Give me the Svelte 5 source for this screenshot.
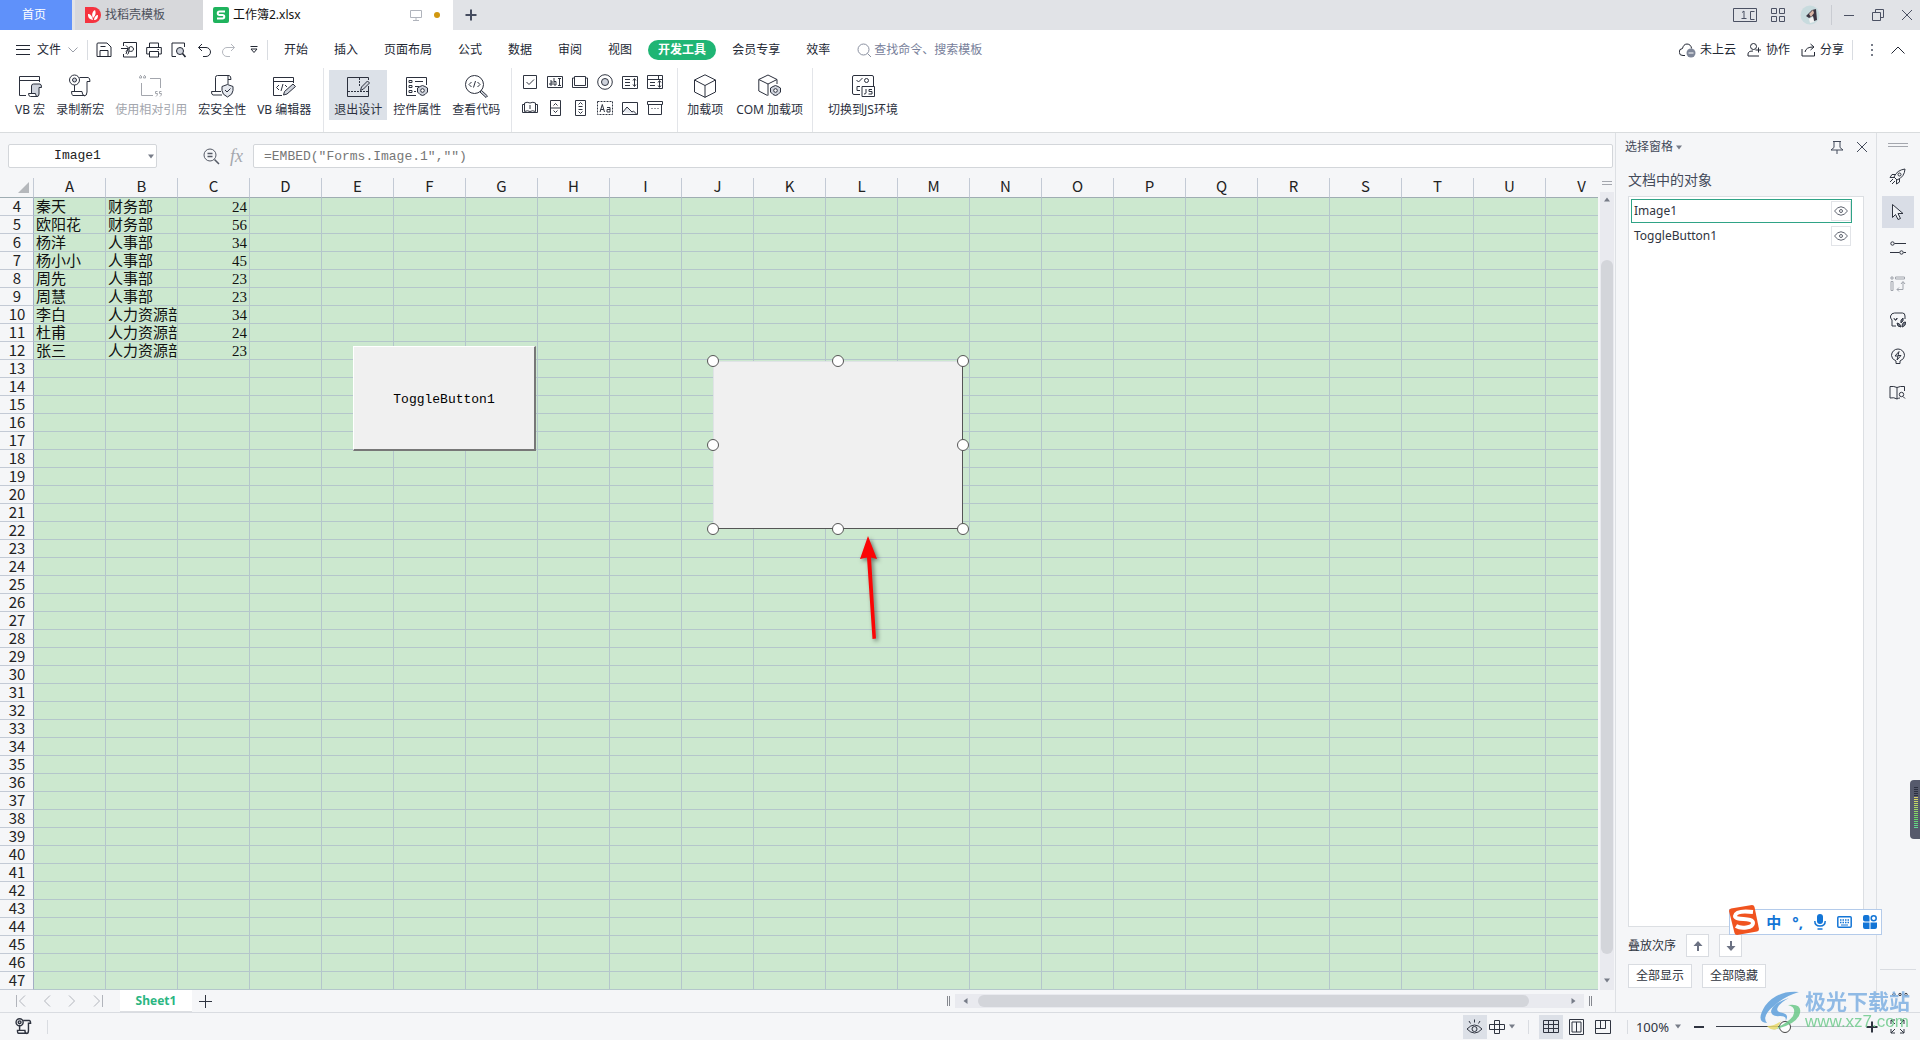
<script lang="ts">
	type Icon = [number, number, string];

	const icons: Record<string, Icon> = {
		docer: [16, 16, '<path d="M0 0h8a8 8 0 0 1 0 16H0z" fill="#f5333f" stroke="none"/><path d="M8 13C3 12 3 9 3 7c2 0 4 1 5 6zM8 11C6 7 8 4 10 3c1 3 1 5-2 8zM9 13c0-3 2-5 4-5 0 3-1 5-4 5z" fill="#fff" stroke="none"/>'],
		sheet: [16, 16, '<rect width="16" height="16" rx="2" fill="#1fb35d" stroke="none"/><path d="M12 4.500H6.500a1.700 1.700 0 0 0 0 3.500h3a1.700 1.700 0 0 1 0 3.500H4" stroke="#fff" stroke-width="2"/>'],
		monitor: [12, 12, '<path d="M.5 1.500h11v7H.500zM6 9v2M3 11.500h6" stroke="#b0b4bc"/>'],
		plus: [12, 12, '<path d="M6 .500v11M.500 6h11" stroke-width="2"/>'],
		plusThin: [13, 13, '<path d="M6.500 0v13M0 6.500h13"/>'],
		layout: [24, 15, '<path d="M.5 .500h23v13H.500zM9 4.500l2-1.500v8M8.500 10.500h5M21.500 3.500h-4v8h4"/>'],
		apps: [15, 15, '<path d="M.5 .500h5v5H.500zM8.500 .500h5v5h-5zM.500 8.500h5v5H.500zM8.500 8.500h5v5h-5z"/>'],
		avatar: [20, 20, '<circle cx="10" cy="10" r="9.500" fill="#c8dbde" stroke="none"/><path d="M6 11l6-6 4-1 1 11-3 1-1-5-4 2z" fill="#3a3440" stroke="none"/><path d="M9 9l4-4 1 3-3 4z" fill="#d9b6a6" stroke="none"/><path d="M9 14l4-2 1 5-4 1z" fill="#f2f2f2" stroke="none"/>'],
		min: [12, 12, '<path d="M1 6.500h10"/>'],
		restore: [12, 12, '<path d="M.5 3.500h8v8h-8zM3.500 3.500v-3h8v8h-3"/>'],
		close: [12, 12, '<path d="M1 1l10 10M11 1L1 11"/>'],
		menu: [14, 12, '<path d="M0 1.500h14M0 5.500h14M0 10.500h14"/>'],
		down: [10, 6, '<path d="M.5 .500L5 5 9.500 .500" stroke="#9a9ea8"/>'],
		up: [14, 8, '<path d="M.5 7.500L7 1l6.500 6.500"/>'],
		save: [16, 16, '<path d="M1 2q0-1 1-1h9l4 4v9.500H1zM4 14.500v-6h8v6M4.500 4.500h5"/>'],
		pdf: [16, 16, '<path d="M2.500 4V.500h13v14.500h-13V12M0 6.500h7M5 3.500l3 3-3 3M5 12l2-5.500M6.500 12.500c2-1 1-6 2-7.500 1.500-1 4 0 4 2s-2 3-4.500 2"/>'],
		print: [16, 16, '<path d="M3.500 5V1h9v4M3 12H.700V5.500h14.600V12H13M3.500 9.500h9V15h-9zM11.500 7.500h1.500"/>'],
		preview: [16, 16, '<path d="M5 14.500H1V1h12.500v4M13.500 14.500H14"/><circle cx="9" cy="9" r="3.500" fill="#cfd3dc"/><path d="M11.500 11.500l3 3.500" stroke-width="1.600"/>'],
		undo: [14, 15, '<path d="M5 1L1.500 4.500 5 8M1.500 4.500H9a4 4 0 0 1 0 9H6"/>'],
		redo: [14, 15, '<path d="M9 1l3.500 3.500L9 8M12.500 4.500H5a4 4 0 0 0 0 9h3" stroke="#b4b7be"/>'],
		custom: [8, 8, '<path d="M.5 .500h7M1 3l3 3.500L7 3z"/>'],
		search: [15, 15, '<circle cx="6.500" cy="6.500" r="5.500"/><path d="M10.500 10.500L14 14"/>'],
		cloud: [17, 15, '<path d="M6 12.500H4a3.500 3.500 0 0 1-.5-7C4 3 5.500 1 8 1s4.500 2 4.500 4.500"/><circle cx="12" cy="10" r="4.500" fill="#7f8799" stroke="none"/><path d="M9.500 10h5" stroke="#fff"/>'],
		collab: [15, 14, '<circle cx="6.500" cy="3.500" r="3"/><path d="M12 13H1v-2q0-3 5-3M8.500 7H14M11.500 4.500v5"/>'],
		share: [15, 14, '<path d="M1 6v7h12.500V9M4 9q1-5 8-5M9.500 1l3.500 3-3.500 3"/>'],
		dots: [4, 12, '<path d="M2 0v2M2 5v2M2 10v2" stroke="#777c88" stroke-width="2"/>'],
		vbMacro: [24, 24, '<path d="M8 21.500H1.500V2.500H21.500V8M1.500 6.500H21.500"/><path d="M13.500 19V12q0-2 2-2h6.500q1.500 0 1.500 3.500H21V20q0 2.500-2 2.500" fill="#cfd3dc"/><path d="M10.500 19.500h7q0 3 2 3h-7q-2 0-2-3z" fill="#fff"/>'],
		record: [24, 24, '<circle cx="6.500" cy="6" r="5"/><circle cx="6.500" cy="6" r="2" fill="#cfd3dc"/><path d="M11.500 3.500H20q2 0 2 4h-3V18M6.500 11v6.500M3.500 17.500H14q0 4 2.500 4H5q-1.500 0-1.500-4zM19 18q0 4-3 4"/>'],
		relative: [24, 24, '<path d="M11 4.500h10.500V14M2.500 9v12.500H14M2 1q-1.500 1-1.500 3h2V2M6 1q-1.500 1-1.500 3h2V2M18.500 17.500h-2v2h2q0 2-1.500 3M22.500 17.500h-2v2h2q0 2-1.500 3"/>'],
		security: [24, 24, '<path d="M5.500 18V3.500q0-2 2-2H19q2 0 2 4h-3M18 2v8M12 21H3q-1.500 0-1.500-3.500H11"/><path d="M17.500 10.500l5.500 2v4q0 4-5.500 6.500-5.500-2.500-5.500-6.500v-4z" fill="#e6e9ef"/><path d="M15 16l2 2 3.500-3.500"/>'],
		editor: [24, 24, '<path d="M10 21.500H1.500V3.500H21.500V9M1.500 7.500H21.500M7 11l-2.500 2.500L7 16M9 17l2-7M13 11l2 2"/><path d="M11.500 21l1-3.500 8.500-7.500 2.500 2.500-8.500 7.500z" fill="#cfd3dc"/>'],
		design: [24, 24, '<path d="M22.500 12v10.500H1.500V3.500H22.500V6"/><path d="M13.500 4v8.500M2 17.500h20" stroke-dasharray="2 1"/><path d="M14.500 16.500l1-3.500 6-6 2 2-6 6z" fill="#cfd3dc"/>'],
		props: [24, 24, '<path d="M11 21.500H1.500V3.500H21.500V11M10 7.500h8M10 12.500h4M4 6.500h3v2H4zM4 11.500h3v2H4zM4 16.500h3v2H4zM9 17.500h2"/><path d="M17.500 11.500l2.500 1 2.500 1.500v4l-2.500 2.500-2.500 1-2.500-1-2.500-2.500v-4l2.500-1.500z" fill="#cfd3dc"/><circle cx="17.500" cy="16.500" r="1.800" fill="#fff"/>'],
		viewCode: [24, 24, '<circle cx="10.500" cy="10.500" r="9"/><path d="M7.500 8L5 10.500 7.500 13M9.500 13.500l2-6.500M13.500 8l2.500 2.500-2.500 2.500"/><path d="M16 18l1.500-1.500 6 5.500-1.500 1.500z" fill="#cfd3dc"/>'],
		cube: [24, 24, '<path d="M12 .800L22.500 6v12L12 23.300 1.500 18V6zM1.500 6L12 11.500 22.500 6M12 11.500v12"/>'],
		cubeGear: [24, 24, '<path d="M9.500 21.500L.800 17V5.500L10 1l9 4.500V10M.800 5.500L10 10l9-4.500M10 10v11.500"/><path d="M17.500 11.500l2.500 1 2.500 1.500v4l-2.500 2.500-2.500 1-2.500-1-2.500-2.500v-4l2.500-1.500z" fill="#cfd3dc"/><circle cx="17.500" cy="16.500" r="1.800" fill="#fff"/>'],
		js: [24, 24, '<path d="M9 20.500H3q-1.500 0-1.500-1.500V3q0-1.500 1.500-1.500h18q1.500 0 1.500 1.500v9M5.500 6l2 2 4-4M9 12.500H6v4h3"/><circle cx="15.500" cy="6.500" r="2"/><path d="M11 12.500h12.500v10H11zM15 15v4q0 1-2 1M21 15.500h-3v2h3v2.500h-3.500"/>'],
		check: [16, 16, '<path d="M1.500 1.500h13v13h-13zM4.500 8l2.500 2.500 5-5"/>'],
		textbox: [16, 16, '<path d="M.5 2.500h15v11H.500zM3 7h2v4H3V9h2M7 4v7h2V7.500H7M11 4.500h3M11 11.500h3M12.500 4.500v7"/>'],
		command: [16, 16, '<path d="M2.500 2.500h11v9h-11zM2.500 4H.500v9.500h15V4h-2"/>'],
		option: [16, 16, '<circle cx="8" cy="8" r="7.300"/><circle cx="8" cy="8" r="3.500" fill="#cfd3dc"/>'],
		listbox: [16, 16, '<path d="M.5 2.500h15v12H.500zM3 5.500h5M3 8.500h5M3 11.500h5M12.500 5v7M11 6.500l1.500-2 1.500 2M11 10.500l1.500 2 1.500-2"/>'],
		combo: [16, 16, '<path d="M.5 1.500h15v13H.500zM.500 5.500h15M11.500 1.500v4M3 8.500h5M3 11.500h5M12.500 7v6M11 8.500l1.500-2 1.500 2M11 11.500l1.500 2 1.500-2"/>'],
		toggle: [16, 16, '<path d="M8 3Q5 1.500 2.500 3v8.500Q5.500 10 8 11.500 10.500 10 13.500 11.500V3Q11 1.500 8 3zM8 5v4M2.500 4.500h-2v8h15v-8h-2"/>'],
		spin: [16, 16, '<path d="M3.500 .500h10v15h-10zM3.500 8h10M6.500 5.500l2-2 2 2M6.500 10.500l2 2 2-2"/>'],
		scroll: [16, 16, '<path d="M3.500 .500h10v15h-10zM6.500 4.500l2-2 2 2M6.500 11.500l2 2 2-2M6.500 6.500h4M6.500 9.500h4"/>'],
		label: [16, 16, '<path d="M.5 1.500h15v13H.500z" stroke-dasharray="2 1"/><path d="M3 12l2.300-7.500L7.500 12M3.800 9.500h3M10 7.500h3V12h-3V9.500h3"/>'],
		image: [16, 16, '<path d="M.5 2.500h15v12H.500z"/><path d="M1 12l4-5 5 5 1.500-1 3 3" fill="#e6e9ef"/>'],
		frame: [16, 16, '<path d="M.5 1.500h15v3H.500zM1.500 4.500h13v10h-13zM4.500 8.500h1M7.500 8.500h1M10.500 8.500h1"/>'],
		zoomOut: [17, 17, '<circle cx="7" cy="7" r="6"/><path d="M4.500 5.500h5M4.500 8.500h5M11.500 11.500l4.500 4.500" stroke-width="1.500"/>'],
		caret: [8, 5, '<path d="M1 .500h6L4 4.500z" fill="#777c88" stroke="none"/>'],
		caretUp: [8, 5, '<path d="M1 4.500h6L4 .500z" fill="#777c88" stroke="none"/>'],
		caretLeft: [5, 8, '<path d="M4.500 1v6L.500 4z" fill="#777c88" stroke="none"/>'],
		caretRight: [5, 8, '<path d="M.5 1v6L4.500 4z" fill="#777c88" stroke="none"/>'],
		pin: [14, 14, '<path d="M4 1.500h6v6l3 2.500H1l3-2.500zM3 1.500h8M7 10v4"/>'],
		eye: [14, 10, '<path d="M.5 5Q7-3.500 13.500 5 7 13.500 .500 5z"/><circle cx="7" cy="5" r="1.500"/>'],
		rocket: [17, 17, '<path d="M5 9q3-7 11-8-.5 8-8 11zM6 6.500H3L1 9.500h4M10.500 11v3l-3 2v-4M4 11l-3 3M6 13l-3 3"/><circle cx="10.500" cy="6.500" r="1.500"/>'],
		cursor: [14, 18, '<path d="M1.500 1.500v13l3-3 2.500 5 2.500-1-2.500-5h5z" fill="#eef0f4"/>'],
		sliders: [16, 14, '<circle cx="2.500" cy="2.500" r="1.700"/><circle cx="11.500" cy="11.500" r="1.700"/><path d="M4.500 2.500H16M0 11.500h9.500M13.500 11.500H16"/>'],
		transform: [16, 16, '<path d="M1 1h2v2H1zM5.500 1h9v2h-9zM1 5.500h2v9H1zM13 6v7.500H7M11 8l2-2.500L15 8M9 11.500l-2 2 2 2"/>'],
		theme: [16, 16, '<path d="M6 14H2V8Q0 6 .500 4q1-3 4-3h8q2.500 0 2.500 3v3M4 6q0 2 1.500 2T7 6M5 8q2 0 2-2"/><path d="M11 15q-4 0-4-4 3 0 4 4zM11 11q-1-3 2-5 1 3-2 5zM12 15q0-5 3.500-5 .5 4-3.500 5z" fill="#777d89"/>'],
		idea: [16, 17, '<path d="M6 15.500V13Q1.500 11 1.500 7.500a6.500 6.500 0 0 1 13 0Q14.500 11 10 13v2.500zM9 3.500L5 8h3l-1 4 4-4.500H8z"/>'],
		book: [17, 15, '<path d="M8 14q-3-2-7-1V1.500q4-.5 7 1 3-1.500 7.500-1V6M8 2.500V14M8 14q1.500-1 3-1"/><circle cx="12.500" cy="9.500" r="2.200"/><path d="M14 11.500l2 2"/>'],
		more: [16, 5, '<circle cx="2" cy="2.500" r="1.200"/><circle cx="8" cy="2.500" r="1.200"/><circle cx="14" cy="2.500" r="1.200"/>'],
		first: [10, 12, '<path d="M.5 0v12M9 .500L3.500 6 9 11.500"/>'],
		prev: [8, 12, '<path d="M7 .500L1.500 6 7 11.500"/>'],
		next: [8, 12, '<path d="M1 .500L6.500 6 1 11.500"/>'],
		last: [10, 12, '<path d="M9.500 0v12M1 .500L6.500 6 1 11.500"/>'],
		arrowUp: [10, 10, '<path d="M5 10V3" stroke-width="2"/><path d="M.5 5L5 0l4.500 5z" fill="currentColor" stroke="none"/>'],
		arrowDown: [10, 10, '<path d="M5 0v7" stroke-width="2"/><path d="M.5 5L5 10l4.500-5z" fill="currentColor" stroke="none"/>'],
		eyeLash: [17, 16, '<path d="M1 10q7.500-8 15 0-7.500 8-15 0zM8.500 .500v3M3 2l1.500 2.500M14 2l-1.500 2.500"/><circle cx="8.500" cy="10" r="2.500"/>'],
		cross: [16, 14, '<path d="M5.500 .500h5v13h-5zM.500 4.500h15v5H.500zM10.500 4.500v5M5.500 4.500v5"/>'],
		normal: [16, 14, '<path d="M.5 .500h15v12H.500zM.500 4.500h15M.500 8.500h15M5.500 .500v12M10.500 .500v12"/>'],
		page: [16, 16, '<path d="M.5 .500h14v15H.500zM3 3h9v10H3zM7.500 3v10"/>'],
		breaks: [16, 14, '<path d="M.5 .500h15v13H.500zM.500 8.500h10M5.500 .500v8M10.500 .500v8"/>'],
		minus: [10, 2, '<path d="M0 1h10" stroke-width="2"/>'],
		expand: [15, 15, '<path d="M1 5V1h4M10 1h4v4M14 10v4h-4M5 14H1v-4M1 1l4 4M14 1l-4 4M14 14l-4-4M1 14l4-4"/>'],
		imeMic: [12, 16, '<rect x="3" y="0" width="6" height="10" rx="3" fill="#1375d6" stroke="none"/><path d="M.8 7q0 5 5.200 5t5.200-5M3.500 15h5" stroke="#1375d6" stroke-width="1.500"/>'],
		imeKeys: [15, 12, '<rect x=".8" y=".8" width="13.400" height="10.400" rx="1" stroke="#1375d6" stroke-width="1.500"/><path d="M3 4h9.500M3 6.500h9.500" stroke="#1375d6" stroke-width="1.500" stroke-dasharray="1.500 1"/><path d="M4 9h7" stroke="#1375d6"/>'],
		imeApps: [14, 14, '<path d="M2 0h2.500q2 0 2 2v4.500H2q-2 0-2-2V2q0-2 2-2zM0 7.500h6.500V14H2q-2 0-2-2zM7.500 7.500H14V12q0 2-2 2H7.500z" fill="#1375d6" stroke="none"/><circle cx="10.700" cy="3.300" r="2.500" stroke="#1375d6" stroke-width="1.500"/>'],
	};

	const menus = ['开始', '插入', '页面布局', '公式', '数据', '审阅', '视图', '开发工具', '会员专享', '效率'];
	const quick = ['save', 'pdf', 'print', 'preview', 'undo', 'redo'];

	const macros = [
		['vbMacro', 'VB 宏'],
		['record', '录制新宏'],
		['relative', '使用相对引用'],
		['security', '宏安全性'],
		['editor', 'VB 编辑器'],
	];
	const controls = [
		['design', '退出设计'],
		['props', '控件属性'],
		['viewCode', '查看代码'],
	];
	const addins = [
		['cube', '加载项'],
		['cubeGear', 'COM 加载项'],
	];
	const widgets = ['check', 'textbox', 'command', 'option', 'listbox', 'combo', 'toggle', 'spin', 'scroll', 'label', 'image', 'frame'];
	const tools = ['rocket', 'cursor', 'sliders', 'transform', 'theme', 'idea', 'book'];

	const columns = [...'ABCDEFGHIJKLMNOPQRSTUV'];
	const rows = Array.from({ length: 44 }, (_, i) => i + 4);
	const data: Record<number, [string, string, number]> = {
		4: ['秦天', '财务部', 24],
		5: ['欧阳花', '财务部', 56],
		6: ['杨洋', '人事部', 34],
		7: ['杨小小', '人事部', 45],
		8: ['周先', '人事部', 23],
		9: ['周慧', '人事部', 23],
		10: ['李白', '人力资源部', 34],
		11: ['杜甫', '人力资源部', 24],
		12: ['张三', '人力资源部', 23],
	};

	const handles = ['nw', 'n', 'ne', 'w', 'e', 'sw', 's', 'se'];

	let activeMenu = $state('开发工具');
	let selected = $state('Image1');
	let zoom = $state(50);
</script>

{#snippet icon(name: string)}
	<svg
		class="icon"
		width={icons[name][0]}
		height={icons[name][1]}
		viewBox="0 0 {icons[name][0]} {icons[name][1]}"
		aria-hidden="true">{@html icons[name][2]}</svg
	>
{/snippet}

{#snippet big(items: string[][])}
	{#each items as [name, text]}
		<button class="big" class:active={name === 'design'} disabled={name === 'relative'}>
			{@render icon(name)}
			<span>{text}</span>
		</button>
	{/each}
{/snippet}

<div class="app">
	<header class="titlebar">
		<button class="tab home">首页</button>
		<button class="tab docer">{@render icon('docer')}找稻壳模板</button>
		<button class="tab file">
			{@render icon('sheet')}<span class="grow">工作簿2.xlsx</span>
			{@render icon('monitor')}<i class="dot"></i>
		</button>
		<button class="new" aria-label="新建">{@render icon('plus')}</button>
		<div class="window">
			<button aria-label="布局">{@render icon('layout')}</button>
			<button aria-label="应用">{@render icon('apps')}</button>
			<button aria-label="账户">{@render icon('avatar')}</button>
			<i class="sep"></i>
			<button aria-label="最小化">{@render icon('min')}</button>
			<button aria-label="还原">{@render icon('restore')}</button>
			<button aria-label="关闭">{@render icon('close')}</button>
		</div>
	</header>

	<nav class="menubar">
		<button class="filemenu">{@render icon('menu')}文件 {@render icon('down')}</button>
		<i class="sep"></i>
		<div class="quick">
			{#each quick as name}
				<button aria-label={name}>{@render icon(name)}</button>
			{/each}
			<button aria-label="自定义">{@render icon('custom')}</button>
		</div>
		<i class="sep"></i>
		<div class="menus">
			{#each menus as menu}
				<button class:pill={menu === activeMenu} onclick={() => (activeMenu = menu)}>{menu}</button>
			{/each}
		</div>
		<label class="search">
			{@render icon('search')}
			<input type="text" placeholder="查找命令、搜索模板" />
		</label>
		<div class="account">
			<button>{@render icon('cloud')}未上云</button>
			<button>{@render icon('collab')}协作</button>
			<button>{@render icon('share')}分享</button>
			<i class="sep"></i>
			<button aria-label="更多">{@render icon('dots')}</button>
			<button aria-label="收起">{@render icon('up')}</button>
		</div>
	</nav>

	<section class="ribbon">
		<div class="group">{@render big(macros)}</div>
		<div class="group">{@render big(controls)}</div>
		<div class="group widgets">
			{#each widgets as name}
				<button aria-label={name}>{@render icon(name)}</button>
			{/each}
		</div>
		<div class="group addins">{@render big(addins)}</div>
		<div class="group env">{@render big([['js', '切换到JS环境']])}</div>
	</section>

	<div class="main">
		<main class="workbook">
			<div class="formulabar">
				<div class="namebox">
					<input type="text" aria-label="名称框" value="Image1" />
					<button aria-label="名称列表">{@render icon('caret')}</button>
				</div>
				<div class="fx">
					<button aria-label="缩小">{@render icon('zoomOut')}</button>
					<button class="fxbtn">fx</button>
				</div>
				<input class="formula" type="text" aria-label="编辑栏" value={'=EMBED("Forms.Image.1","")'} />
			</div>

			<div class="sheetrow">
				<div class="sheet">
					<table>
						<colgroup>
							<col class="rowcol" />
							{#each columns as column (column)}<col />{/each}
						</colgroup>
						<thead>
							<tr>
								<th class="corner" aria-label="全选"><i></i></th>
								{#each columns as column}<th>{column}</th>{/each}
							</tr>
						</thead>
						<tbody>
							{#each rows as row (row)}
								<tr>
									<th>{row}</th>
									{#each columns as column, i}
										<td class:number={i === 2}>{data[row]?.[i] ?? ''}</td>
									{/each}
								</tr>
							{/each}
						</tbody>
					</table>

					<button class="toggle">ToggleButton1</button>
					<div class="object">
						{#each handles as handle}<i class="handle {handle}"></i>{/each}
					</div>
					<svg class="pointer" width="30" height="112" viewBox="0 0 30 112" aria-hidden="true">
						<path d="M10 4L19 27l-6-1.500L18 106.500l-3.500.5L9 25.500 2 27z" />
					</svg>
				</div>
				<div class="vscroll">
					<i class="grip"></i>
					<div class="vtrack">
						{@render icon('caretUp')}
						<i class="vthumb"></i>
						{@render icon('caret')}
					</div>
				</div>
			</div>

			<div class="tabs">
				<div class="pager">
					<button aria-label="第一张">{@render icon('first')}</button>
					<button aria-label="上一张">{@render icon('prev')}</button>
					<button aria-label="下一张">{@render icon('next')}</button>
					<button aria-label="最后一张">{@render icon('last')}</button>
				</div>
				<button class="sheettab">Sheet1</button>
				<button class="add" aria-label="新建工作表">{@render icon('plusThin')}</button>
				<div class="hscroll">
					<i class="vgrip"></i>
					<div class="htrack">
						{@render icon('caretLeft')}
						<i class="hthumb"></i>
						{@render icon('caretRight')}
					</div>
					<i class="vgrip"></i>
				</div>
			</div>
		</main>

		<aside class="pane">
			<div class="panehead">
				<button>选择窗格 {@render icon('caret')}</button>
				<button class="pinbtn" aria-label="固定">{@render icon('pin')}</button>
				<button aria-label="关闭窗格">{@render icon('close')}</button>
			</div>
			<h2>文档中的对象</h2>
			<ul>
				{#each ['Image1', 'ToggleButton1'] as name}
					<li class:selected={selected === name}>
						<button class="name" onclick={() => (selected = name)}>{name}</button>
						<button class="eye" aria-label="显示 {name}">{@render icon('eye')}</button>
					</li>
				{/each}
			</ul>
			<div class="order">
				<span>叠放次序</span>
				<button aria-label="上移一层">{@render icon('arrowUp')}</button>
				<button aria-label="下移一层">{@render icon('arrowDown')}</button>
			</div>
			<div class="visibility">
				<button>全部显示</button>
				<button>全部隐藏</button>
			</div>
		</aside>

		<aside class="toolbar">
			<i class="grip"></i>
			{#each tools as name}
				<button class:active={name === 'cursor'} class:muted={name === 'transform'} aria-label={name}>{@render icon(name)}</button>
			{/each}
			<div class="bottom"><button aria-label="更多工具">{@render icon('more')}</button></div>
		</aside>
	</div>

	<footer class="status">
		<button class="rec" aria-label="录制宏">{@render icon('record')}</button>
		<i class="sep"></i>
		<div class="views">
			<button class="active" aria-label="护眼模式">{@render icon('eyeLash')}</button>
			<button class="reading" aria-label="阅读模式">{@render icon('cross')}{@render icon('caret')}</button>
			<i class="sep"></i>
			<button class="active" aria-label="普通视图">{@render icon('normal')}</button>
			<button aria-label="页面布局">{@render icon('page')}</button>
			<button aria-label="分页预览">{@render icon('breaks')}</button>
			<i class="sep"></i>
		</div>
		<div class="zoom">
			<button class="percent">100% {@render icon('caret')}</button>
			<button aria-label="缩小">{@render icon('minus')}</button>
			<input type="range" aria-label="缩放" min="0" max="100" bind:value={zoom} />
			<button aria-label="放大">{@render icon('plus')}</button>
			<button aria-label="全屏">{@render icon('expand')}</button>
		</div>
	</footer>

	<div class="ime">
		<svg class="sogou" width="32" height="32" viewBox="0 0 32 32" aria-hidden="true">
			<path d="M1 7q0-2 2-2.500L24 1q2 0 2.500 2L31 25q0 2-2 2.500L9 31q-2 0-2.500-2z" fill="#f0531f" />
			<path d="M25 8Q8 6 7 12c0 5 18 1 18 7 0 5-12 6-17 3" fill="none" stroke="#fff" stroke-width="4" />
		</svg>
		<span>中</span>
		<span>°,</span>
		{@render icon('imeMic')}
		{@render icon('imeKeys')}
		{@render icon('imeApps')}
	</div>

	<div class="meter">
		{#each Array(21) as _, i}
			<i style="background: {i < 5 ? '#2c3040' : `hsl(${55 + (i - 5) * 6}, 60%, 62%)`}"></i>
		{/each}
	</div>

	<div class="watermark">
		<svg width="46" height="42" viewBox="0 0 46 42" aria-hidden="true">
			<path d="M40 2Q18 0 6 16-4 32 8 33 2 26 16 15 26 6 40 2z" fill="#5ea0dc" />
			<path d="M30 8Q14 13 12 21q0 6 9 5 8 0 5 6 5-7-2-9-8-1-5-6 3-5 11-9z" fill="#5ea0dc" />
			<path d="M29 15q14-2 12 8-3 12-28 17 16-7 21-14 4-9-5-11z" fill="#6cc98a" />
			<path d="M8 36q8 0 14-5l-4 8q-6 2-10-3z" fill="#e8d96a" />
		</svg>
		<div>
			<b>极光下载站</b>
			<span>www.xz7.com</span>
		</div>
	</div>
</div>

<style>
	:global(body) {
		margin: 0;
	}

	.app {
		position: relative;
		display: flex;
		flex-direction: column;
		height: 100vh;
		overflow: hidden;
		background: #f5f6f8;
		color: #2f3440;
		font: 12px/16px 'Noto Sans', 'Noto Sans CJK SC', sans-serif;
	}

	button,
	input {
		box-sizing: border-box;
		margin: 0;
		padding: 0;
		border: 0;
		background: none;
		color: inherit;
		font: inherit;
		white-space: nowrap;
	}

	button {
		display: flex;
		align-items: center;
		justify-content: center;
	}

	.icon {
		flex: none;
		display: block;
		fill: none;
		stroke: currentColor;
	}

	.sep {
		width: 1px;
		height: 20px;
		background: #d9dce1;
	}

	/* title bar */
	.titlebar {
		display: flex;
		height: 30px;
		background: #e1e3e7;
	}

	.tab {
		height: 30px;
	}

	.home {
		width: 72px;
		padding-right: 4px;
		background: #5f91fa;
		color: #fff;
	}

	.docer {
		justify-content: flex-start;
		gap: 4px;
		width: 128px;
		margin-left: 3px;
		padding-left: 10px;
		background: #d7d8db;
		color: #4c505b;
	}

	.file {
		gap: 4px;
		width: 250px;
		padding: 0 13px 0 10px;
		background: #fff;
		color: #111;
	}

	.grow {
		flex: 1;
		text-align: left;
	}

	.dot {
		width: 6px;
		height: 6px;
		margin-left: 8px;
		border-radius: 50%;
		background: #d1970f;
	}

	.new {
		width: 36px;
		color: #454c5f;
	}

	.window {
		display: flex;
		align-items: center;
		gap: 14px;
		margin-left: auto;
		padding-right: 7px;
		color: #4b5163;
	}

	.window .sep {
		margin: 0 -3px;
		background: #c9ccd2;
	}

	.window button:nth-last-child(-n + 2) {
		margin-left: 3px;
	}

	/* menu bar */
	.menubar {
		display: flex;
		align-items: center;
		height: 36px;
		padding-top: 2px;
		background: #fff;
		color: #222733;
	}

	.filemenu {
		gap: 7px;
		width: 87px;
		padding-left: 7px;
	}

	.quick {
		display: flex;
		align-items: center;
		gap: 9px;
		width: 179px;
		padding-left: 8px;
		box-sizing: border-box;
	}

	.quick button {
		width: 16px;
	}

	.menus {
		display: flex;
		gap: 6px;
		padding-left: 6px;
	}

	.menus button {
		height: 20px;
		padding: 0 10px;
		border-radius: 10px;
	}

	.menus .pill {
		background: #1fb574;
		color: #fff;
		font-weight: bold;
	}

	.search {
		display: flex;
		align-items: center;
		gap: 2px;
		margin-left: 17px;
		color: #8a90a0;
	}

	.search input {
		width: 140px;
	}

	.search input::placeholder {
		color: #77809a;
		opacity: 1;
	}

	.account {
		display: flex;
		align-items: center;
		gap: 11px;
		margin-left: auto;
		padding-right: 15px;
	}

	.account button {
		gap: 4px;
	}

	.account .sep {
		margin-left: -3px;
	}

	.account button:nth-last-child(-n + 2) {
		margin-left: 6px;
	}

	/* ribbon */
	.ribbon {
		display: flex;
		height: 64px;
		border-bottom: 1px solid #d9dcde;
		background: #fff;
	}

	.group {
		display: flex;
		align-items: flex-start;
		gap: 1px;
		padding: 2px 5px;
		border-right: 1px solid #e3e5e9;
	}

	.group:first-child {
		padding-left: 10px;
		padding-right: 7px;
	}

	.group:nth-child(2) {
		padding-right: 6px;
	}

	.big {
		flex-direction: column;
		gap: 4px;
		height: 50px;
		padding: 2px 5px 0;
		color: #2b303d;
	}

	.big:disabled {
		color: #a3a6ad;
	}

	.big.active {
		background: #dce1e8;
	}

	.widgets {
		display: grid;
		grid-template-columns: repeat(6, 16px);
		align-content: start;
		gap: 10px 9px;
		padding: 6px 14px 6px 10px;
	}

	.addins {
		gap: 3px;
		padding: 2px 4px;
	}

	.env {
		padding-left: 10px;
		border-right: 0;
	}

	/* main area */
	.main {
		display: flex;
		flex: 1;
		min-height: 0;
	}

	.workbook {
		display: flex;
		flex: 1;
		flex-direction: column;
		min-width: 0;
	}

	.formulabar {
		display: flex;
		padding: 11px 2px 10px 8px;
		font: 13px/16px 'Liberation Mono', monospace;
	}

	.namebox {
		display: flex;
		width: 149px;
		height: 24px;
		box-sizing: border-box;
		border: 1px solid #d3d6da;
		border-radius: 2px;
		background: #fff;
		color: #222;
	}

	.namebox input {
		flex: 1;
		min-width: 0;
		text-align: center;
	}

	.namebox button {
		width: 10px;
		color: #666;
	}

	.fx {
		display: flex;
		align-items: center;
		justify-content: flex-end;
		gap: 10px;
		width: 96px;
		padding-right: 10px;
		box-sizing: border-box;
		color: #555a66;
	}

	.fxbtn {
		color: #a4a7ad;
		font: italic 18px/20px 'Liberation Serif', serif;
	}

	.formula {
		flex: 1;
		height: 24px;
		padding: 0 10px;
		border: 1px solid #d3d6da;
		border-radius: 2px;
		background: #fff;
		color: #777;
	}

	.sheetrow {
		display: flex;
		flex: 1;
		min-height: 0;
	}

	.sheet {
		position: relative;
		flex: 1;
		min-width: 0;
		overflow: hidden;
	}

	table {
		width: 1618px;
		border-spacing: 0;
		table-layout: fixed;
	}

	col {
		width: 72px;
	}

	.rowcol {
		width: 34px;
	}

	tr {
		height: 18px;
	}

	thead tr {
		height: 20px;
	}

	th,
	td {
		box-sizing: border-box;
		padding: 0;
		border-right: 1px solid #b4c6cb;
		border-bottom: 1px solid #b4c6cb;
		white-space: nowrap;
	}

	th {
		border-color: #c3cad5;
		background: #f5f6f8;
		color: #222;
		font: 15px/15px 'Noto Sans CJK SC', sans-serif;
		vertical-align: top;
	}

	thead th {
		border-bottom-color: #9fadb3;
	}

	tbody th {
		border-right-color: #a3aec4;
		padding-left: 1px;
	}

	.corner {
		vertical-align: middle;
	}

	.corner i {
		display: block;
		width: 0;
		margin-left: 18px;
		border-left: 11px solid transparent;
		border-bottom: 11px solid #b5b8bc;
	}

	td {
		height: 18px;
		padding: 1px 0 0 2px;
		background: #cce8cf;
		color: #111;
		font: 15px/16px 'Liberation Serif', 'Noto Sans CJK SC', serif;
		overflow: hidden;
	}

	.number {
		padding-right: 2px;
		text-align: right;
	}

	.toggle {
		position: absolute;
		left: 353px;
		top: 168px;
		width: 183px;
		height: 105px;
		padding-top: 4px;
		border: solid;
		border-width: 1px 2px 2px 1px;
		border-color: #fff #777 #777 #fff;
		background: #f0f0f0;
		color: #000;
		font: 13px/16px 'Liberation Mono', monospace;
	}

	.object {
		position: absolute;
		left: 713px;
		top: 183px;
		width: 250px;
		height: 168px;
		background: #f0f0f0;
		box-shadow: inset 1px 1px #dfe3e6, inset -1px -1px #555;
	}

	.handle {
		position: absolute;
		left: 50%;
		top: 50%;
		width: 10px;
		height: 10px;
		margin: -6px;
		border: 1px solid #555;
		border-radius: 50%;
		background: #fff;
	}

	.nw, .w, .sw { left: 0; }
	.ne, .e, .se { left: 100%; }
	.nw, .n, .ne { top: 0; }
	.sw, .s, .se { top: 100%; }

	.pointer {
		position: absolute;
		left: 858px;
		top: 354px;
		fill: #fb0505;
		filter: drop-shadow(2px 2px 2px rgba(0, 0, 0, 0.5));
	}

	.vscroll {
		display: flex;
		flex-direction: column;
		align-items: center;
		width: 17px;
	}

	.grip {
		width: 10px;
		height: 2px;
		margin: 3px 0 7px;
		border: solid #a4a7ae;
		border-width: 1px 0;
	}

	.vtrack {
		display: flex;
		flex: 1;
		flex-direction: column;
		align-items: center;
		width: 14px;
		padding: 5px 0 7px;
		background: #e9eaef;
		color: #81858f;
	}

	.vthumb {
		flex: 1;
		width: 12px;
		margin: 58px 0 24px;
		border-radius: 6px;
		background: #d3d5da;
	}

	.tabs {
		display: flex;
		height: 22px;
	}

	.pager {
		display: flex;
		gap: 17px;
		width: 120px;
		padding-left: 16px;
		box-sizing: border-box;
		color: #b1b4bb;
	}

	.sheettab {
		width: 72px;
		border-bottom: 1px solid #dcdee2;
		background: #fff;
		color: #2bb682;
		font-weight: bold;
	}

	.add {
		width: 26px;
	}

	.hscroll {
		display: flex;
		flex: 1;
		align-items: center;
		gap: 5px;
		max-width: 645px;
		margin-left: auto;
		padding-right: 23px;
	}

	.vgrip {
		width: 1px;
		height: 10px;
		border: solid #85888f;
		border-width: 0 1px;
	}

	.htrack {
		display: flex;
		flex: 1;
		align-items: center;
		justify-content: space-between;
		height: 14px;
		padding: 0 8px;
		background: #e9eaef;
		color: #81858f;
	}

	.hthumb {
		flex: 1;
		height: 12px;
		margin: 0 42px 0 10px;
		border-radius: 6px;
		background: #d3d5da;
	}

	/* selection pane */
	.pane {
		display: flex;
		flex-direction: column;
		width: 261px;
		box-sizing: border-box;
		padding: 4px 12px 24px;
		border-left: 1px solid #dde0e4;
	}

	.panehead {
		display: flex;
		align-items: center;
		gap: 12px;
		height: 20px;
		margin-left: -3px;
		margin-right: -4px;
		color: #434a5a;
	}

	.panehead button {
		gap: 2px;
	}

	.pinbtn {
		margin-left: auto;
	}

	h2 {
		margin: 13px 0 6px;
		color: #434a5a;
		font-size: 14px;
		font-weight: normal;
		line-height: 20px;
	}

	ul {
		flex: 1;
		margin: 0;
		padding: 2px 11px 0 2px;
		border: 1px solid #dcdfe3;
		background: #fff;
		list-style: none;
	}

	li {
		display: flex;
		height: 24px;
		box-sizing: border-box;
		margin-bottom: 1px;
		border: 1px solid transparent;
	}

	.selected {
		border-color: #2fa386;
	}

	.name {
		flex: 1;
		justify-content: flex-start;
		padding-left: 2px;
	}

	.eye {
		width: 20px;
		height: 20px;
		margin: 1px 0;
		border: 1px solid #e2e4e8;
		color: #5c616d;
	}

	.order,
	.visibility {
		display: flex;
		align-items: center;
		gap: 10px;
	}

	.order {
		margin: 7px 0;
	}

	.order button {
		width: 23px;
		height: 23px;
		border: 1px solid #d9dce1;
		background: #fff;
		color: #6c7283;
	}

	.visibility button {
		width: 64px;
		height: 24px;
		border: 1px solid #d9dce1;
		background: #fff;
	}

	.toolbar {
		display: flex;
		flex-direction: column;
		align-items: center;
		gap: 4px;
		width: 44px;
		box-sizing: border-box;
		padding-right: 2px;
		border-left: 1px solid #dde0e4;
	}

	.toolbar .grip {
		width: 20px;
		margin: 10px 0 9px;
	}

	.toolbar button {
		width: 32px;
		height: 32px;
	}

	.toolbar .active {
		background: #d9dde6;
	}

	.toolbar .muted {
		color: #a0a4ac;
	}

	.bottom {
		width: 36px;
		height: 43px;
		margin-top: auto;
		padding-top: 8px;
		box-sizing: border-box;
		border-top: 1px solid #d9dce1;
	}

	.bottom button {
		margin-left: 4px;
	}

	/* status bar */
	.status {
		display: flex;
		align-items: center;
		height: 27px;
		border-top: 1px solid #d9dce1;
	}

	.rec {
		width: 47px;
	}

	.rec .icon,
	.status :global(.rec .icon) {
		width: 17px;
		height: 17px;
		stroke-width: 2;
	}

	.status .sep {
		height: 14px;
	}

	.views {
		display: flex;
		align-items: center;
		gap: 2px;
		margin-left: auto;
	}

	.views button {
		width: 24px;
		height: 24px;
	}

	.views .reading {
		gap: 3px;
		width: 27px;
	}

	.views .sep {
		margin: 0 8px 0 10px;
	}

	.views .active {
		background: #dce0e7;
	}

	.zoom {
		display: flex;
		align-items: center;
		gap: 12px;
		padding-right: 15px;
	}

	.percent {
		gap: 5px;
		font-size: 13px;
	}

	.zoom input {
		appearance: none;
		width: 138px;
		height: 14px;
		background: linear-gradient(#3a3f4b, #3a3f4b) 0 50% / 50% 1px no-repeat, linear-gradient(#b9bdc5, #b9bdc5) 0 50% / 100% 1px no-repeat;
	}

	.zoom input::-webkit-slider-thumb {
		appearance: none;
		width: 12px;
		height: 12px;
		border: 1px solid #444;
		border-radius: 50%;
		background: #fff;
	}

	/* floating pieces over the window */
	.ime {
		position: absolute;
		right: 38px;
		bottom: 105px;
		display: flex;
		align-items: center;
		gap: 11px;
		height: 24px;
		padding: 0 4px 0 36px;
		border: 1px solid #b4cbea;
		background: #fff;
		color: #1375d6;
		font-size: 15px;
		font-weight: bold;
	}

	.sogou {
		position: absolute;
		left: -2px;
		top: -6px;
	}

	.meter {
		position: absolute;
		right: 0;
		top: 780px;
		display: flex;
		flex-direction: column;
		gap: 1px;
		width: 10px;
		height: 59px;
		box-sizing: border-box;
		padding: 7px 2px 0 4px;
		border-radius: 4px 0 0 4px;
		background: #565a6c;
	}

	.meter i {
		height: 1px;
	}

	.watermark {
		position: absolute;
		right: 10px;
		bottom: 8px;
		display: flex;
		align-items: center;
		opacity: 0.85;
		pointer-events: none;
	}

	.watermark div {
		display: flex;
		flex-direction: column;
	}

	.watermark b {
		color: #7fb0e2;
		font-size: 21px;
		line-height: 22px;
	}

	.watermark span {
		color: #6fcb8c;
		font: 17px/20px 'Liberation Sans', sans-serif;
	}
</style>
